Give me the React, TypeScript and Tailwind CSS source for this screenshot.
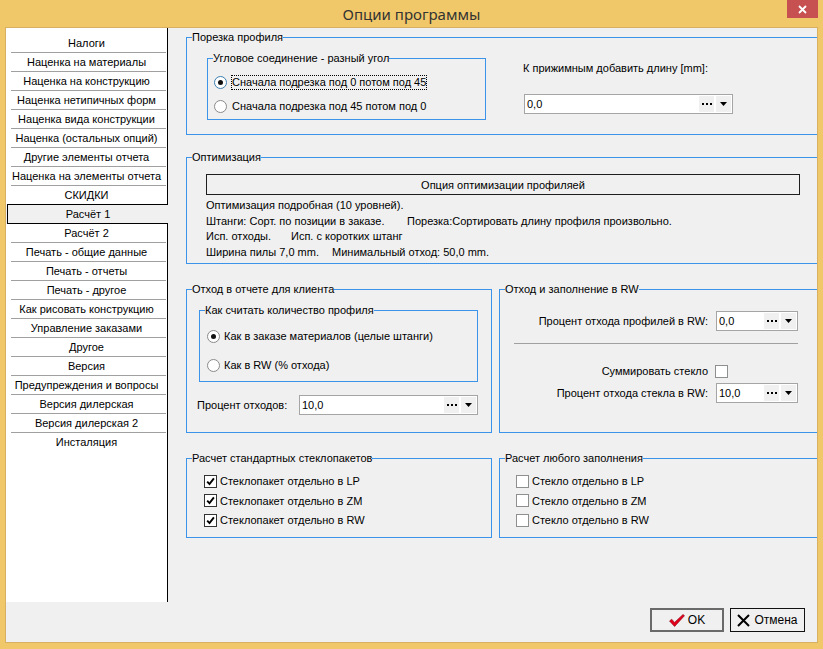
import React from "react";

const topItems = [
  "Налоги",
  "Наценка на материалы",
  "Наценка на конструкцию",
  "Наценка нетипичных форм",
  "Наценка вида конструкции",
  "Наценка (остальных опций)",
  "Другие элементы отчета",
  "Наценка на элементы отчета",
];

const bottomItems = [
  "Расчёт 2",
  "Печать - общие данные",
  "Печать - отчеты",
  "Печать - другое",
  "Как рисовать конструкцию",
  "Управление заказами",
  "Другое",
  "Версия",
  "Предупреждения и вопросы",
  "Версия дилерская",
  "Версия дилерская 2",
  "Инсталяция",
];

function ListRow({ label, last }: { label: string; last?: boolean }) {
  return (
    <div className="flex h-[19px] shrink-0 flex-col">
      <div className="flex flex-1 items-center justify-center leading-[14px]">{label}</div>
      {!last && <div className="ml-[5px] mr-[1px] h-px bg-[#a0a0a0]" />}
      {last && <div className="h-px" />}
    </div>
  );
}

function Group({
  title,
  className,
  children,
}: {
  title: string;
  className?: string;
  children?: React.ReactNode;
}) {
  return (
    <fieldset className={`shrink-0 border border-[#3c93ea] ${className ?? ""}`}>
      <legend className="ml-[5px] px-0 leading-[14px]">{title}</legend>
      {children}
    </fieldset>
  );
}

function Combo({ value, className }: { value: string; className?: string }) {
  return (
    <div className={`flex h-[20px] shrink-0 items-center border border-[#a5a5a5] bg-white ${className ?? ""}`}>
      <span className="flex-1 pl-[2px] leading-[16px]">{value}</span>
      <span className="flex h-[16px] w-[15px] items-center justify-center gap-[2px] bg-[#f0f0f0]">
        <span className="h-[2px] w-[2px] bg-black" />
        <span className="h-[2px] w-[2px] bg-black" />
        <span className="h-[2px] w-[2px] bg-black" />
      </span>
      <span className="ml-[2px] mr-[1px] flex h-[16px] w-[15px] items-center justify-center bg-[#f0f0f0]">
        <svg width="7" height="4" viewBox="0 0 7 4">
          <path d="M0 0h7L3.5 4z" fill="#000" />
        </svg>
      </span>
    </div>
  );
}

function Radio({ checked, focus }: { checked?: boolean; focus?: boolean }) {
  return (
    <span
      className={`flex h-[13px] w-[13px] shrink-0 items-center justify-center rounded-full border bg-white ${
        focus ? "border-[#3c7fb1]" : "border-[#8a8a8a]"
      }`}
    >
      {checked && <span className="h-[5px] w-[5px] rounded-full bg-[#111]" />}
    </span>
  );
}

function Check({ checked }: { checked?: boolean }) {
  return (
    <span
      className={`flex h-[13px] w-[13px] shrink-0 items-center justify-center border bg-white ${
        checked ? "border-[#333]" : "border-[#8e8f8f]"
      }`}
    >
      {checked && (
        <svg width="9" height="9" viewBox="0 0 9 9">
          <path d="M1.2 4.6l2.3 2.5L7.9 1.4" stroke="#000" strokeWidth="1.9" fill="none" />
        </svg>
      )}
    </span>
  );
}

function CheckRow({ label, checked }: { label: string; checked?: boolean }) {
  return (
    <div className="flex h-[16px] items-center">
      <Check checked={checked} />
      <span className="ml-[3px] leading-[14px]">{label}</span>
    </div>
  );
}

export default function App() {
  return (
    <div className="flex h-[649px] w-[823px] flex-col bg-[#f0c869] font-['Liberation_Sans',Arial,sans-serif] text-[11px] text-black">
      {/* title bar */}
      <div className="grid h-[27px] shrink-0 grid-cols-[1fr_auto_1fr]">
        <div />
        <div className="pt-[4px] font-['Noto_Sans',sans-serif] text-[15px] leading-[20px] text-[#333]">
          Опции программы
        </div>
        <div className="flex justify-end pr-[5px]">
          <div className="flex h-[18px] w-[31px] items-center justify-center bg-[#c75050]">
            <svg width="9" height="9" viewBox="0 0 9 9">
              <path d="M1 1l7 7M8 1L1 8" stroke="#fff" strokeWidth="1.8" />
            </svg>
          </div>
        </div>
      </div>

      {/* client area */}
      <div className="mx-[5px] flex h-[616px] shrink-0 flex-col border border-[#d7b061] bg-[#f0f0f0]">
        <div className="flex h-[574px] shrink-0">
          {/* left list */}
          <div className="flex w-[162px] shrink-0 flex-col">
            <div className="flex flex-col border-r border-black bg-white pt-[6px]">
              {topItems.map((t) => (
                <ListRow key={t} label={t} />
              ))}
              <div className="flex h-[18px] items-center justify-center leading-[14px]">СКИДКИ</div>
            </div>
            <div className="ml-[1px] flex h-[20px] shrink-0 items-center justify-center border-y border-l border-black bg-[#f0f0f0] leading-[14px]">
              Расчёт 1
            </div>
            <div className="flex flex-1 flex-col border-r border-black bg-white">
              {bottomItems.map((t, i) => (
                <ListRow key={t} label={t} last={i === bottomItems.length - 1} />
              ))}
            </div>
          </div>

          {/* right panel */}
          <div className="flex-1 overflow-hidden pl-[18px]">
            <Group title="Порезка профиля" className="mt-[2px] h-[105px] w-[660px]">
              <div className="flex">
                <Group title="Угловое соединение - разный угол" className="ml-[20px] mt-[7px] h-[69px] w-[279px]">
                  <div className="mt-[9px] flex h-[16px] items-center pl-[6px]">
                    <Radio checked focus />
                    <span className="ml-[4px] border border-dotted border-black leading-[13px]">
                      Сначала подрезка под 0 потом под 45
                    </span>
                  </div>
                  <div className="mt-[8px] flex h-[16px] items-center pl-[6px]">
                    <Radio />
                    <span className="ml-[5px] leading-[14px]">Сначала подрезка под 45 потом под 0</span>
                  </div>
                </Group>
                <div className="ml-[37px] mt-[17px] flex flex-col">
                  <div className="leading-[14px]">К прижимным добавить длину [mm]:</div>
                  <Combo value="0,0" className="ml-[1px] mt-[19px] w-[209px]" />
                </div>
              </div>
            </Group>

            <Group title="Оптимизация" className="mt-[15px] h-[114px] w-[660px]">
              <div className="ml-[19px] mt-[10px] flex h-[21px] w-[594px] items-center justify-center border border-[#1e1e1e] leading-[14px]">
                Опция оптимизации профиляей
              </div>
              <div className="ml-[19px] mt-[3px] leading-[15.5px]">
                <div>Оптимизация подробная (10 уровней).</div>
                <div>
                  <span className="inline-block w-[201px]">Штанги: Сорт. по позиции в заказе.</span>
                  <span>Порезка:Сортировать длину профиля произвольно.</span>
                </div>
                <div>
                  <span className="inline-block w-[85px]">Исп. отходы.</span>
                  <span>Исп. с коротких штанг</span>
                </div>
                <div>
                  <span className="inline-block w-[126px]">Ширина пилы 7,0 mm.</span>
                  <span>Минимальный отход: 50,0 mm.</span>
                </div>
              </div>
            </Group>

            <div className="mt-[18px] flex gap-[7px]">
              <Group title="Отход в отчете для клиента" className="h-[151px] w-[306px]">
                <Group title="Как считать количество профиля" className="ml-[12px] mt-[7px] h-[79px] w-[279px]">
                  <div className="mt-[11px] flex h-[16px] items-center pl-[7px]">
                    <Radio checked />
                    <span className="ml-[4px] leading-[14px]">Как в заказе материалов (целые штанги)</span>
                  </div>
                  <div className="mt-[13px] flex h-[16px] items-center pl-[7px]">
                    <Radio />
                    <span className="ml-[4px] leading-[14px]">Как в RW (% отхода)</span>
                  </div>
                </Group>
                <div className="ml-[10px] mt-[13px] flex items-center">
                  <span className="w-[102px] leading-[14px]">Процент отходов:</span>
                  <Combo value="10,0" className="w-[179px]" />
                </div>
              </Group>

              <Group title="Отход и заполнение в RW" className="h-[151px] w-[340px]">
                <div className="mt-[15px] flex items-center">
                  <span className="w-[208px] text-right leading-[14px]">Процент отхода профилей в RW:</span>
                  <Combo value="0,0" className="ml-[8px] w-[82px]" />
                </div>
                <div className="ml-[14px] mt-[12px] h-px w-[284px] bg-[#a0a0a0]" />
                <div className="mt-[19px] flex h-[16px] items-center">
                  <span className="w-[208px] text-right leading-[14px]">Суммировать стекло</span>
                  <span className="ml-[7px]">
                    <Check />
                  </span>
                </div>
                <div className="mt-[4px] flex items-center">
                  <span className="w-[208px] text-right leading-[14px]">Процент отхода стекла в RW:</span>
                  <Combo value="10,0" className="ml-[8px] w-[82px]" />
                </div>
              </Group>
            </div>

            <div className="mt-[18px] flex gap-[7px]">
              <Group title="Расчет стандартных стеклопакетов" className="h-[87px] w-[306px]">
                <div className="ml-[17px] mt-[8px] flex flex-col gap-[3.5px]">
                  <CheckRow label="Стеклопакет отдельно в LP" checked />
                  <CheckRow label="Стеклопакет отдельно в ZM" checked />
                  <CheckRow label="Стеклопакет отдельно в RW" checked />
                </div>
              </Group>
              <Group title="Расчет любого заполнения" className="h-[87px] w-[340px]">
                <div className="ml-[16px] mt-[8px] flex flex-col gap-[3.5px]">
                  <CheckRow label="Стекло отдельно в LP" />
                  <CheckRow label="Стекло отдельно в ZM" />
                  <CheckRow label="Стекло отдельно в RW" />
                </div>
              </Group>
            </div>
          </div>
        </div>

        {/* buttons */}
        <div className="flex flex-1 items-start justify-end gap-[6px] pr-[12px] pt-[6px]">
          <div className="flex h-[24px] w-[74px] items-center justify-center border-2 border-[#6a6a6a]">
            <svg width="16" height="13" viewBox="0 0 16 13" className="mr-[3px]">
              <path d="M0.5 7l2.2-1.8 2.8 3.2L14 0.5l1.5 1.2L5.6 12.5z" fill="#e3001b" stroke="#8a0010" strokeWidth="0.6" />
            </svg>
            <span className="text-[12px] leading-[14px]">OK</span>
          </div>
          <div className="flex h-[24px] w-[75px] items-center justify-center border border-[#111]">
            <svg width="13" height="13" viewBox="0 0 13 13" className="mr-[4px]">
              <path d="M1 1l11 11M12 1L1 12" stroke="#000" strokeWidth="2" />
            </svg>
            <span className="text-[12px] leading-[14px]">Отмена</span>
          </div>
        </div>
      </div>
    </div>
  );
}
